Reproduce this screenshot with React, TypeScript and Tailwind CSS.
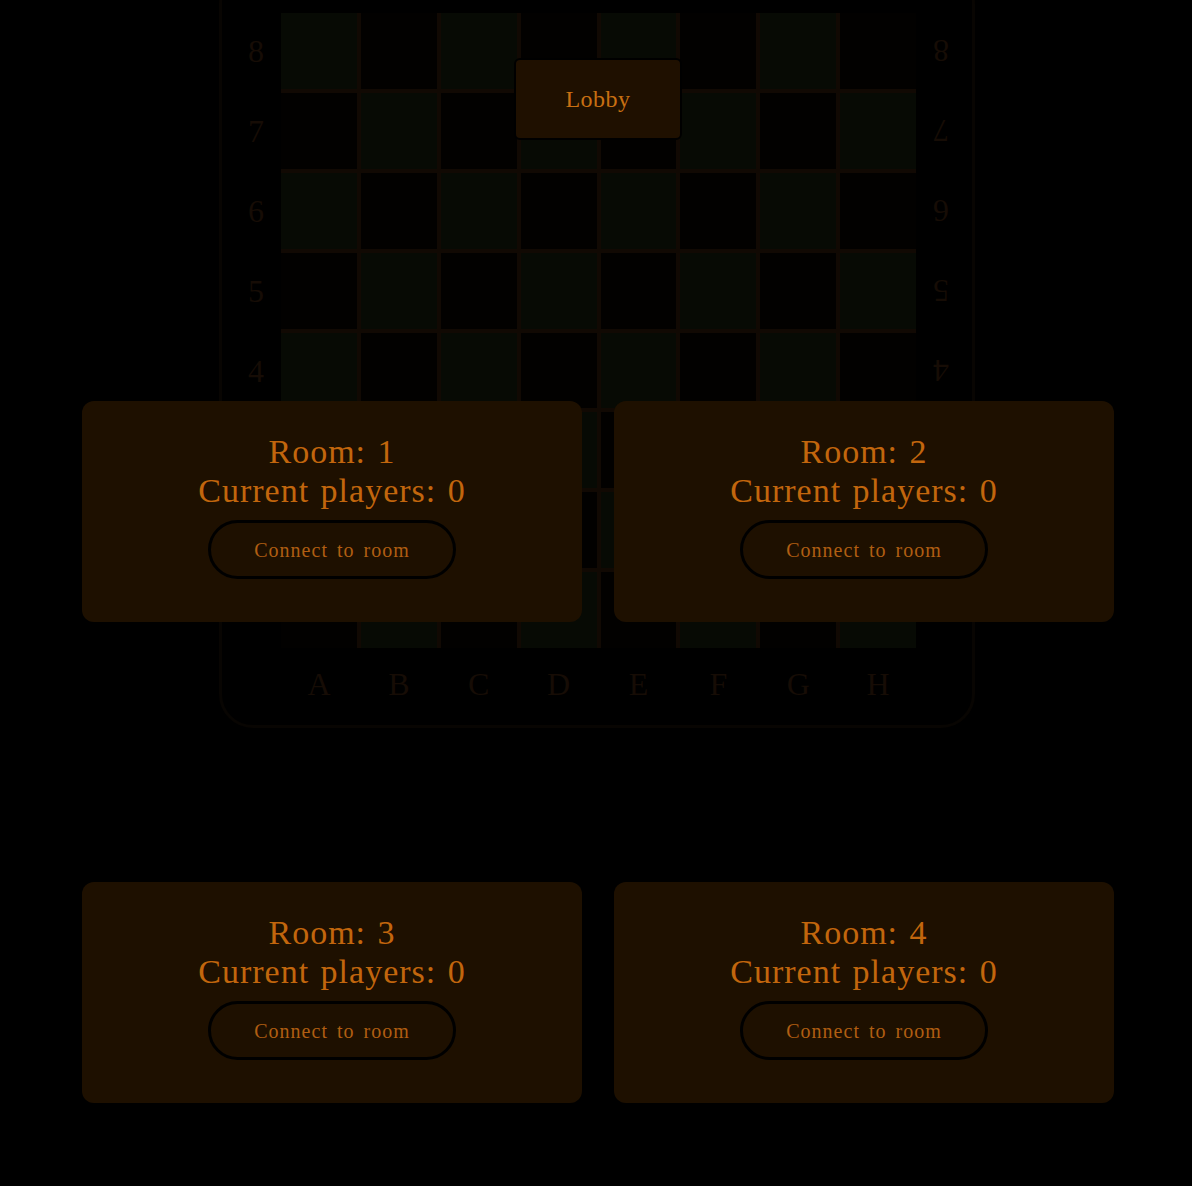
const files = ["A", "B", "C", "D", "E", "F", "G", "H"];
const ranks = [8, 7, 6, 5, 4, 3, 2, 1];
const rooms = [1, 2, 3, 4];

const serif = "font-['Liberation_Serif',serif]";

function Board() {
  return (
    <div className="absolute left-[219px] top-[-30px] rounded-[34px] border-[3px] border-[#080502] pt-[40px] pb-[5px]">
      <div className="flex">
        <div className="flex w-[59px] flex-col gap-1">
          {ranks.map((r) => (
            <div key={r} className="flex h-[75.9px] items-center justify-end pr-[17px] text-[32px] text-[#160c05]">
              {r}
            </div>
          ))}
        </div>
        <div className="grid w-[635px] grid-cols-8 gap-1 bg-[#110903]">
          {ranks.map((r, ri) =>
            files.map((f, fi) => (
              <div
                key={f + r}
                className={
                  (ri + fi) % 2 === 0
                    ? "h-[75.9px] bg-[#070a04]"
                    : "h-[75.9px] bg-[#020100]"
                }
              />
            ))
          )}
        </div>
        <div className="flex w-[56px] flex-col gap-1">
          {ranks.map((r) => (
            <div key={r} className="flex h-[75.9px] items-center pl-[17px] text-[32px] text-[#160c05]">
              <span className="rotate-180">{r}</span>
            </div>
          ))}
        </div>
      </div>
      <div className="ml-[59px] grid h-[72px] w-[635px] grid-cols-8 items-center gap-1 text-center text-[32px] text-[#160c05]">
        {files.map((f) => (
          <span key={f}>{f}</span>
        ))}
      </div>
    </div>
  );
}

function RoomCard({ id }: { id: number }) {
  return (
    <div className="flex h-[221px] w-[500px] flex-col items-center rounded-[12px] bg-[#1e1000] pt-[31px]">
      <div className="text-center text-[34px] leading-[39px] tracking-[1px] text-[#c2660d] [word-spacing:2px]">
        <div>Room: {id}</div>
        <div>Current players: 0</div>
      </div>
      <button className="mt-[10px] h-[59px] w-[248px] rounded-full border-[3px] border-black text-[20px] tracking-[1px] text-[#b05e12] [word-spacing:3px]">
        Connect to room
      </button>
    </div>
  );
}

export default function App() {
  return (
    <div className={`relative min-h-[1186px] overflow-hidden bg-black ${serif}`}>
      <Board />
      <div className="relative flex flex-col items-center pl-[4px] pt-[58px] pb-[83px]">
        <button className="h-[82px] w-[168px] rounded-[6px] border-2 border-black bg-[#1f1000] text-[24px] tracking-[0.5px] text-[#c86f12]">
          Lobby
        </button>
        <div className="mt-[261px] grid grid-cols-2 gap-x-[32px] gap-y-[260px]">
          {rooms.map((id) => (
            <RoomCard key={id} id={id} />
          ))}
        </div>
      </div>
    </div>
  );
}
